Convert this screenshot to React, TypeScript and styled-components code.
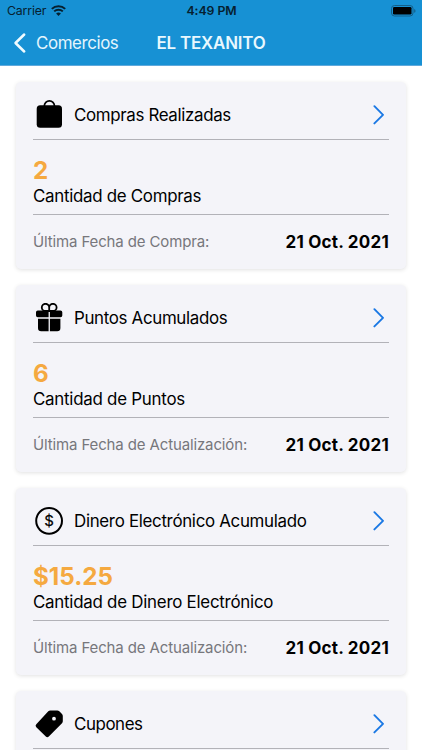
import React from "react";
import styled, { createGlobalStyle } from "styled-components";

const GlobalStyle = createGlobalStyle`
  * { box-sizing: border-box; }
  body {
    margin: 0;
    background: #fff;
    font-family: Inter, "Liberation Sans", sans-serif;
    color: #000;
    overflow: hidden;
  }
`;

const Screen = styled.div`
  width: 422px;
  height: 750px;
  display: flex;
  flex-direction: column;
  overflow: hidden;
  background: #fff;
`;

const TopBar = styled.header`
  flex: none;
  height: 66px;
  background: #1791d4;
  border-bottom: 1px solid #5fa9dc;
`;

const StatusBar = styled.div`
  height: 21px;
  padding: 0 6px 0 7px;
  display: grid;
  grid-template-columns: 1fr auto 1fr;
  align-items: center;
  color: #06202f;
  font-size: 12.3px;
  line-height: 21px;
`;

const Carrier = styled.div`
  display: flex;
  align-items: center;
  gap: 5px;
  letter-spacing: -0.15px;
`;

const Clock = styled.div`
  font-weight: 600;
  letter-spacing: -0.05px;
`;

const Battery = styled.div`
  display: flex;
  justify-content: flex-end;
`;

const NavBar = styled.nav`
  height: 44px;
  display: grid;
  grid-template-columns: 1fr auto 1fr;
  align-items: center;
  color: #fff;
  font-size: 16.9px;
  line-height: 44px;
`;

const BackButton = styled.div`
  display: flex;
  align-items: center;
  gap: 9px;
  padding-left: 13px;
  color: #e4f5fd;
  letter-spacing: -0.4px;
`;

const NavTitle = styled.h1`
  margin: 0;
  font-size: 16.9px;
  font-weight: 600;
  letter-spacing: -0.16px;
  color: #e8f8fe;
`;

const CardList = styled.main`
  display: flex;
  flex-direction: column;
  gap: 16px;
  padding: 16px 16px 0;
`;

const Card = styled.section`
  flex: none;
  height: 187px;
  padding: 0 17px;
  border-radius: 5px;
  background: #f4f4f9;
  box-shadow: 0 1px 4px rgba(0, 0, 0, 0.12);
`;

const CardHeader = styled.div`
  height: 58px;
  padding: 8px 4px 0 1px;
  display: flex;
  align-items: center;
  border-bottom: 1px solid #b2b2b8;
`;

const CardTitle = styled.h2<{ $tracking: number }>`
  flex: 1;
  margin: 0 0 0 10px;
  font-size: 16.9px;
  font-weight: 400;
  line-height: 24px;
  letter-spacing: ${(p) => p.$tracking}px;
`;

const Amount = styled.div`
  height: 46px;
  padding-top: 19px;
  color: #f5a940;
  font-size: 24.2px;
  font-weight: 700;
  line-height: 24px;
  letter-spacing: 0;
`;

const AmountLabel = styled.div<{ $tracking: number }>`
  height: 29px;
  font-size: 16.9px;
  line-height: 20px;
  letter-spacing: ${(p) => p.$tracking}px;
  border-bottom: 1px solid #b2b2b8;
`;

const CardFooter = styled.div`
  height: 54px;
  padding-bottom: 1px;
  display: flex;
  align-items: center;
  justify-content: space-between;
`;

const DateLabel = styled.span`
  color: #77777c;
  font-size: 15px;
  letter-spacing: -0.13px;
`;

const DateValue = styled.span`
  font-size: 17px;
  font-weight: 700;
  letter-spacing: 0.23px;
`;

const WifiIcon = () => (
  <svg width="15" height="11" viewBox="0 0 15 11" fill="none" stroke="#06202f" strokeWidth="2">
    <path d="M.8 3.9C4.5.3 10.5.3 14.2 3.9" />
    <path d="M3.2 6.4C5.6 4.1 9.4 4.1 11.8 6.4" />
    <path d="M7.5 10.9L5.1 8.4Q7.5 6.5 9.9 8.4Z" fill="#06202f" stroke="none" />
  </svg>
);

const BatteryIcon = () => (
  <svg width="25" height="12" viewBox="0 0 25 12">
    <rect x=".5" y=".5" width="21.5" height="10.5" rx="3" fill="none" stroke="#145f88" />
    <rect x="2" y="2" width="18.5" height="7.5" rx="1.3" fill="#000" />
    <path d="M23.2 4v3.8q1.3-.5 1.3-1.9T23.2 4z" fill="#145f88" />
  </svg>
);

const BackIcon = () => (
  <svg width="14" height="22" viewBox="0 0 14 22" fill="none" stroke="#f0fbff" strokeWidth="2.5" strokeLinecap="round" strokeLinejoin="round">
    <path d="M11.2 2.5L2.5 11L11.2 19.5" />
  </svg>
);

const ChevronIcon = () => (
  <svg width="12" height="20" viewBox="0 0 12 20" fill="none" stroke="#1a78e4" strokeWidth="1.9" strokeLinecap="round" strokeLinejoin="round">
    <path d="M1.4 1.2L10 9.800L1.4 18.4" />
  </svg>
);

const IconFrame = styled.svg`
  width: 30px;
  height: 30px;
  flex: none;
`;

const BagIcon = () => (
  <IconFrame viewBox="0 0 30 30">
    <rect x="2.7" y="5.2" width="25.3" height="22.6" rx="3.5" />
    <path d="M10.3 7V6a5.1 5.1 0 0 1 10.2 0v1" fill="none" stroke="#000" strokeWidth="1.7" />
  </IconFrame>
);

const GiftIcon = () => (
  <IconFrame viewBox="0 0 30 30">
    <path d="M3.8 7.5H14.6V14.3H3.8Q2 14.3 2 12.5V9.3Q2 7.5 3.8 7.5ZM15.9 7.5H26.5Q28.3 7.5 28.3 9.3V12.5Q28.3 14.3 26.5 14.3H15.9Z" />
    <path d="M4 15.8H14.6V28.3H7.2Q4 28.3 4 25.1ZM15.9 15.8H26.4V25.1Q26.4 28.3 23.2 28.3H15.9Z" />
    <path d="M15.2 8V4.4A3.7 3.6 0 1 0 11.5 8ZM15.2 8V4.4A3.7 3.6 0 1 1 18.9 8Z" fill="none" stroke="#000" strokeWidth="1.8" />
  </IconFrame>
);

const CoinGlyph = styled.text`
  font-family: Inter, sans-serif;
  font-size: 15px;
  font-weight: 400;
  text-anchor: middle;
  stroke: #000;
  stroke-width: 0.2px;
`;

const CoinIcon = () => (
  <IconFrame viewBox="0 0 30 30">
    <circle cx="15.1" cy="14.8" r="12.9" fill="none" stroke="#000" strokeWidth="2" />
    <CoinGlyph x="15.1" y="20.1">$</CoinGlyph>
  </IconFrame>
);

const TagIcon = () => (
  <IconFrame viewBox="0 0 30 30">
    <path
      fillRule="evenodd"
      d="M16.3 1.5H23.3Q24.5 1.5 25.3 2.3L28 5Q28.8 5.8 28.8 7V12.3Q28.8 13.5 28 14.3L14.8 27.5Q13.3 29 11.8 27.5L2.3 18.2Q.8 16.7 2.3 15.2L14.3 2.3Q15.1 1.5 16.3 1.5ZM20 7.8a1.9 1.9 0 1 0 0 3.8a1.9 1.9 0 1 0 0-3.8Z"
    />
  </IconFrame>
);

interface Summary {
  icon: React.ReactNode;
  title: string;
  titleTracking: number;
  amount?: string;
  label?: string;
  labelTracking?: number;
  dateLabel?: string;
}

const summaries: Summary[] = [
  {
    icon: <BagIcon />,
    title: "Compras Realizadas",
    titleTracking: -0.34,
    amount: "2",
    label: "Cantidad de Compras",
    labelTracking: -0.29,
    dateLabel: "Última Fecha de Compra:",
  },
  {
    icon: <GiftIcon />,
    title: "Puntos Acumulados",
    titleTracking: -0.33,
    amount: "6",
    label: "Cantidad de Puntos",
    labelTracking: -0.25,
    dateLabel: "Última Fecha de Actualización:",
  },
  {
    icon: <CoinIcon />,
    title: "Dinero Electrónico Acumulado",
    titleTracking: -0.31,
    amount: "$15.25",
    label: "Cantidad de Dinero Electrónico",
    labelTracking: -0.25,
    dateLabel: "Última Fecha de Actualización:",
  },
  {
    icon: <TagIcon />,
    title: "Cupones",
    titleTracking: -0.42,
  },
];

export default function App() {
  return (
    <>
      <GlobalStyle />
      <Screen>
        <TopBar>
          <StatusBar>
            <Carrier>Carrier<WifiIcon /></Carrier>
            <Clock>4:49 PM</Clock>
            <Battery><BatteryIcon /></Battery>
          </StatusBar>
          <NavBar>
            <BackButton><BackIcon />Comercios</BackButton>
            <NavTitle>EL TEXANITO</NavTitle>
          </NavBar>
        </TopBar>
        <CardList>
          {summaries.map((s) => (
            <Card key={s.title}>
              <CardHeader>
                {s.icon}
                <CardTitle $tracking={s.titleTracking}>{s.title}</CardTitle>
                <ChevronIcon />
              </CardHeader>
              {s.amount && (
                <>
                  <Amount>{s.amount}</Amount>
                  <AmountLabel $tracking={s.labelTracking ?? 0}>{s.label}</AmountLabel>
                  <CardFooter>
                    <DateLabel>{s.dateLabel}</DateLabel>
                    <DateValue>21 Oct. 2021</DateValue>
                  </CardFooter>
                </>
              )}
            </Card>
          ))}
        </CardList>
      </Screen>
    </>
  );
}
